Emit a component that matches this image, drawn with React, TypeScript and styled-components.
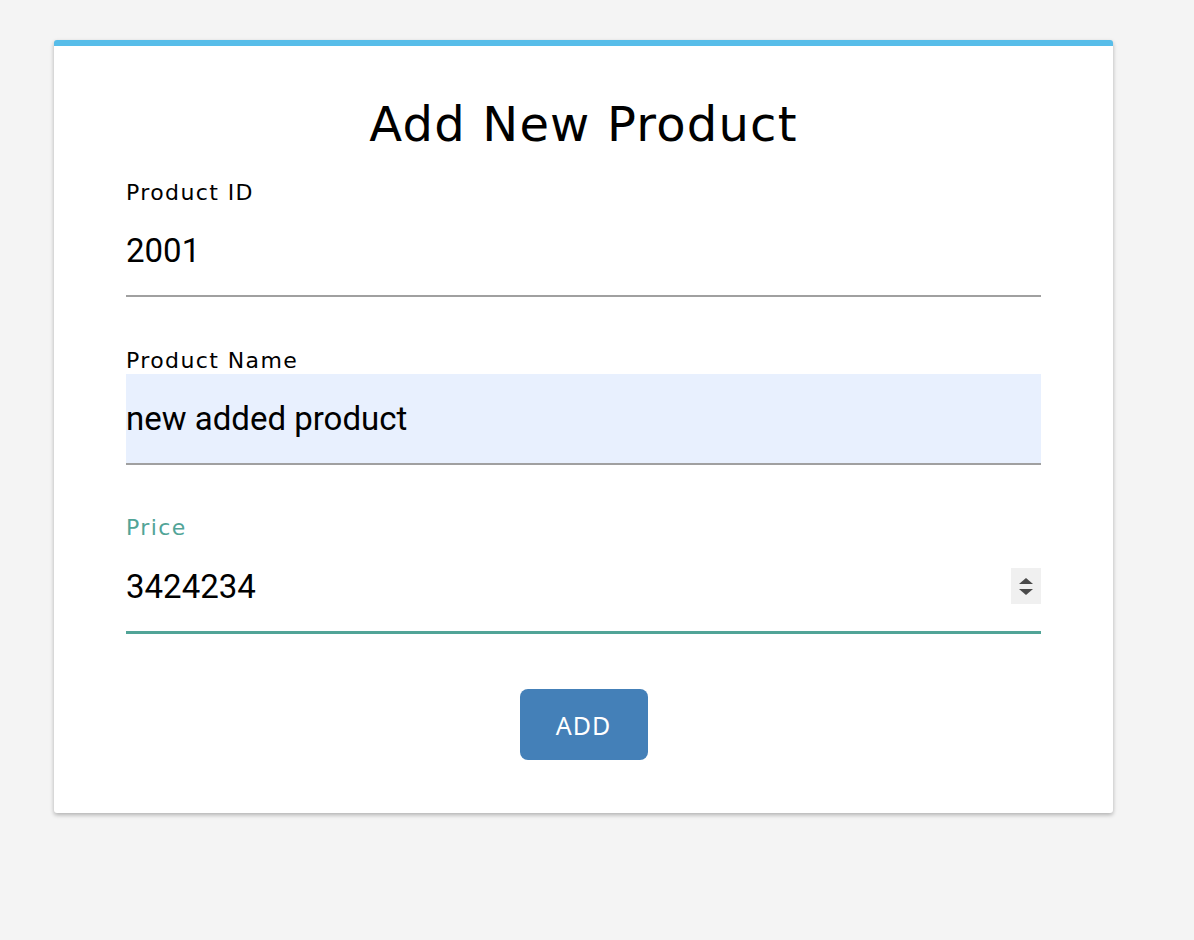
import React from "react";
import styled, { createGlobalStyle } from "styled-components";

const GlobalStyle = createGlobalStyle`
  html, body { margin: 0; padding: 0; background: #f4f4f4; }
  body { font-family: "DejaVu Sans", sans-serif; }
  * { box-sizing: border-box; }
`;

const Page = styled.div`
  padding: 40px 0 0 54px;
  min-height: 940px;
`;

const Card = styled.form`
  width: 1059px;
  background: #ffffff;
  border-top: 6px solid #57bde9;
  border-radius: 3px;
  box-shadow: 0 2px 4px rgba(0, 0, 0, 0.28);
  padding: 48px 72px 53px 72px;
  display: flex;
  flex-direction: column;
`;

const Title = styled.h1`
  margin: 0 0 26px 0;
  text-align: center;
  font-family: "DejaVu Sans", sans-serif;
  font-weight: 400;
  font-size: 48px;
  letter-spacing: 1.2px;
  line-height: 60px;
  color: #000;
`;

const Field = styled.div<{ $gap: number }>`
  display: flex;
  flex-direction: column;
  margin-bottom: ${(p) => p.$gap}px;
`;

const Label = styled.label<{ $active?: boolean }>`
  font-family: "DejaVu Sans", sans-serif;
  font-size: 22px;
  letter-spacing: 1.4px;
  line-height: 26px;
  color: ${(p) => (p.$active ? "#51a497" : "#000")};
`;

const InputRow = styled.div<{ $active?: boolean; $filled?: boolean }>`
  display: flex;
  align-items: center;
  height: ${(p) => (p.$active ? "93px" : "91px")};
  border-bottom: ${(p) => (p.$active ? "3px solid #51a497" : "2px solid #a0a0a0")};
  background: ${(p) => (p.$filled ? "#e8f0fe" : "transparent")};
`;

const Input = styled.input`
  flex: 1;
  border: none;
  outline: none;
  background: transparent;
  padding: 0;
  font-family: Roboto, sans-serif;
  font-size: 33px;
  color: #000;
  min-width: 0;
`;

const Spinner = styled.div`
  width: 30px;
  height: 36px;
  background: #f0f0f0;
  display: flex;
  flex-direction: column;
  align-items: center;
  justify-content: center;
  gap: 5px;
  margin-top: 0;
`;

const Arrow = styled.div<{ $down?: boolean }>`
  width: 0;
  height: 0;
  border-left: 7px solid transparent;
  border-right: 7px solid transparent;
  ${(p) =>
    p.$down
      ? "border-top: 6px solid #4a4a4a;"
      : "border-bottom: 6px solid #4a4a4a;"}
`;

const ButtonRow = styled.div`
  display: flex;
  justify-content: center;
`;

const AddButton = styled.button`
  width: 128px;
  height: 71px;
  border: none;
  border-radius: 8px;
  background: #4480b8;
  color: #fff;
  font-family: "Noto Sans", sans-serif;
  font-size: 25px;
  letter-spacing: 1px;
  cursor: pointer;
`;

export default function App() {
  return (
    <>
      <GlobalStyle />
      <Page>
        <Card onSubmit={(e) => e.preventDefault()}>
          <Title>Add New Product</Title>
          <Field $gap={51}>
            <Label>Product ID</Label>
            <InputRow>
              <Input defaultValue="2001" />
            </InputRow>
          </Field>
          <Field $gap={50}>
            <Label>Product Name</Label>
            <InputRow $filled>
              <Input defaultValue="new added product" />
            </InputRow>
          </Field>
          <Field $gap={55}>
            <Label $active>Price</Label>
            <InputRow $active>
              <Input defaultValue="3424234" />
              <Spinner>
                <Arrow />
                <Arrow $down />
              </Spinner>
            </InputRow>
          </Field>
          <ButtonRow>
            <AddButton type="submit">ADD</AddButton>
          </ButtonRow>
        </Card>
      </Page>
    </>
  );
}
